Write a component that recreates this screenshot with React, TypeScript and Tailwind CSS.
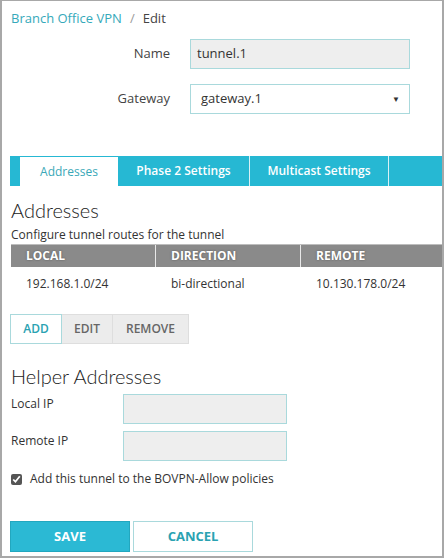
export default function App() {
  const font = { fontFamily: '"Open Sans", "Liberation Sans", sans-serif' };
  const heading = { fontFamily: 'Lato, "Open Sans", sans-serif' };
  return (
    <div
      className="w-[444px] h-[558px] border-t border-r-2 border-b-2 border-l-2 border-[#a8a8a8] bg-white text-[#333] overflow-hidden"
      style={font}
    >
      <div className="pl-[9px] pt-[8px] text-[13px] leading-[18px]">
        <span className="text-[#35a9ba]">Branch Office VPN</span>
        <span className="text-[#9a9a9a] mx-[8px]">/</span>
        <span className="text-[#444]">Edit</span>
      </div>

      <div className="mt-[12px] flex items-center">
        <div className="w-[170px] pr-[2px] text-right text-[13px] text-[#444]">Name</div>
        <div className="ml-[18px] w-[220px] h-[30px] border border-[#a9d9dc] bg-[#eeeeee] px-[6px] flex items-center text-[13px] text-[#333]">
          tunnel.1
        </div>
      </div>

      <div className="mt-[15px] flex items-center">
        <div className="w-[170px] pr-[2px] text-right text-[13px] text-[#444]">Gateway</div>
        <div className="ml-[18px] w-[220px] h-[30px] border border-[#a9d9dc] bg-white pl-[10px] pr-[9px] flex items-center justify-between text-[13px] text-[#333]">
          <span>gateway.1</span>
          <span className="text-[8px] text-[#333]">▼</span>
        </div>
      </div>

      <div className="mt-[42px] ml-[8px] flex h-[30px] bg-[#26b8d3] text-[12px] font-semibold text-white">
        <div className="w-[10px]" />
        <div className="w-[98px] mt-[1px] bg-white text-[#3aa8b7] font-normal flex items-center justify-center">
          Addresses
        </div>
        <div className="w-[132px] flex items-center justify-center border-r border-[#d8f1f6]">
          Phase 2 Settings
        </div>
        <div className="w-[139px] flex items-center justify-center border-r border-[#d8f1f6]">
          Multicast Settings
        </div>
        <div className="flex-1" />
      </div>

      <div className="pl-[9px] mt-[12px] text-[20px] font-light leading-[24px] text-[#222]" style={heading}>
        Addresses
      </div>
      <div className="pl-[9px] mt-[4px] text-[12px] leading-[18px] text-[#333]">
        Configure tunnel routes for the tunnel
      </div>

      <div className="ml-[9px]">
        <div
          className="flex h-[23px] bg-[#8a8a8a] border-t border-[#bdbdbd] text-[12px] font-bold text-white items-center"
          style={{ textShadow: '0 0 2px #555' }}
        >
          <div className="w-[145px] pl-[15px] h-full flex items-center border-r border-[#e8e8e8]">LOCAL</div>
          <div className="w-[145px] pl-[15px] h-full flex items-center border-r border-[#e8e8e8]">DIRECTION</div>
          <div className="flex-1 pl-[15px] h-full flex items-center">REMOTE</div>
        </div>
        <div className="flex h-[33px] items-center text-[12px] text-[#333]">
          <div className="w-[145px] pl-[15px]">192.168.1.0/24</div>
          <div className="w-[145px] pl-[15px]">bi-directional</div>
          <div className="flex-1 pl-[15px]">10.130.178.0/24</div>
        </div>
      </div>

      <div className="ml-[8px] mt-[14px] flex h-[30px] text-[12px] font-semibold">
        <div className="w-[52px] border border-[#a9d9dc] bg-white text-[#2aa2b2] flex items-center justify-center">
          ADD
        </div>
        <div className="w-[51px] border-y border-r border-[#dedede] bg-[#ececec] text-[#666] flex items-center justify-center">
          EDIT
        </div>
        <div className="w-[76px] border-y border-r border-[#dedede] bg-[#ececec] text-[#666] flex items-center justify-center">
          REMOVE
        </div>
      </div>

      <div className="pl-[9px] mt-[20px] text-[20px] font-light leading-[24px] text-[#222]" style={heading}>
        Helper Addresses
      </div>

      <div className="mt-[6px] flex items-start">
        <div className="w-[121px] pl-[9px] text-[12px] text-[#333] pt-[1px]">Local IP</div>
        <div className="w-[164px] h-[30px] border border-[#a9d9dc] bg-[#eeeeee]" />
      </div>
      <div className="mt-[7px] flex items-start">
        <div className="w-[121px] pl-[9px] text-[12px] text-[#333] pt-[1px]">Remote IP</div>
        <div className="w-[164px] h-[30px] border border-[#a9d9dc] bg-[#eeeeee]" />
      </div>

      <label className="mt-[9px] pl-[9px] flex items-center text-[12px] text-[#333]">
        <input type="checkbox" defaultChecked className="w-[11px] h-[11px] accent-[#555] m-0" />
        <span className="ml-[8px]">Add this tunnel to the BOVPN-Allow policies</span>
      </label>

      <div className="ml-[8px] mt-[33px] flex gap-[3px] text-[13px] font-bold">
        <div className="w-[120px] h-[31px] bg-[#2bb9d4] border border-[#22a7bf] text-white flex items-center justify-center">
          SAVE
        </div>
        <div className="w-[120px] h-[31px] bg-white border border-[#a9d9dc] text-[#2aa2b2] flex items-center justify-center">
          CANCEL
        </div>
      </div>
    </div>
  );
}
